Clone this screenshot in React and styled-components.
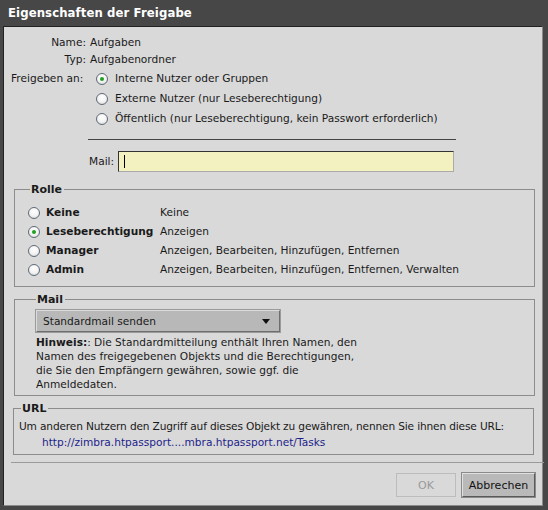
import React from 'react'
import styled, { createGlobalStyle, css } from 'styled-components'

const GlobalStyle = createGlobalStyle`
  html, body {
    margin: 0;
    padding: 0;
    background: #474747;
  }
  body {
    font-family: 'DejaVu Sans', Tahoma, sans-serif;
    font-size: 10.6px;
    color: #1a1a1a;
  }
`

const Window = styled.div`
  width: 548px;
  height: 510px;
  box-sizing: border-box;
  background: #474747;
  padding: 0 5px 4px 3px;
  display: flex;
  flex-direction: column;
`

const TitleBar = styled.div`
  height: 26px;
  display: flex;
  align-items: center;
  padding-left: 5px;
  color: #fff;
  font-weight: bold;
  font-size: 11.7px;
  letter-spacing: 0.1px;
`

const Panel = styled.div`
  flex: 1;
  background: #d9d9d9;
  border-top: 1px solid #222;
  border-left: 1px solid #222;
  border-right: 1px solid #8a8a8a;
  border-bottom: 1px solid #8a8a8a;
  display: flex;
  flex-direction: column;
  padding: 9px 7px 0 7px;
`

const InfoGrid = styled.div`
  display: grid;
  grid-template-columns: 75px auto;
  column-gap: 4px;
  row-gap: 4px;
  align-items: start;
`

const Label = styled.div`
  text-align: ${p => (p.$left ? 'left' : 'right')};
  white-space: nowrap;
  line-height: 13px;
  ${p => p.$left && css`margin-top: 2px;`}
`

const Value = styled.div`
  line-height: 13px;
`

const RadioList = styled.div`
  display: flex;
  flex-direction: column;
  gap: 7px;
  padding-left: 6px;
  margin-top: 2px;
`

const RadioRow = styled.label`
  display: flex;
  align-items: center;
  gap: 7px;
  line-height: 13px;
  white-space: nowrap;
`

const Radio = styled.span`
  width: 12px;
  height: 12px;
  box-sizing: border-box;
  border-radius: 50%;
  border: 1px solid #5f6b78;
  background: radial-gradient(circle at 50% 35%, #ffffff 0%, #f2f2f2 55%, #c8c8c8 100%);
  position: relative;
  flex: none;
  ${p => p.checked && css`
    &::after {
      content: '';
      position: absolute;
      left: 3px;
      top: 3px;
      width: 4px;
      height: 4px;
      border-radius: 50%;
      background: #20a020;
    }
  `}
`

const Divider = styled.div`
  margin: 14px 0 0 77px;
  width: 368px;
  height: 1px;
  background: #444;
`

const MailRow = styled.div`
  display: flex;
  align-items: center;
  gap: 4px;
  margin: 11px 0 0 78px;
`

const MailInput = styled.div`
  width: 336px;
  height: 21px;
  box-sizing: border-box;
  background: #f3f1c0;
  border-top: 1px solid #333;
  border-left: 1px solid #333;
  border-right: 1px solid #aaa;
  border-bottom: 1px solid #aaa;
  display: flex;
  align-items: center;
  padding-left: 5px;

  &::before {
    content: '';
    width: 1px;
    height: 13px;
    background: #000;
  }
`

const Group = styled.fieldset`
  margin: ${p => p.$top}px 0 0 ${p => p.$left || 3}px;
  width: 521px;
  box-sizing: border-box;
  border: 1px solid #8c8c8c;
  padding: ${p => p.$pad};
  min-width: 0;
`

const Legend = styled.legend`
  font-weight: bold;
  font-size: 11px;
  padding: 0 2px 0 1px;
  margin-left: 2px;
  line-height: 13px;
`

const RoleGrid = styled.div`
  display: grid;
  grid-template-columns: 132px auto;
  row-gap: 6px;
`

const RoleName = styled(RadioRow)`
  font-weight: bold;
  gap: 6px;
`

const RoleDesc = styled.div`
  line-height: 13px;
`

const Select = styled.div`
  width: 244px;
  height: 22px;
  box-sizing: border-box;
  background: #b8b8b8;
  border-top: 1px solid #dcdcdc;
  border-left: 1px solid #dcdcdc;
  border-right: 1px solid #6e6e6e;
  border-bottom: 1px solid #6e6e6e;
  outline: 1px solid #9a9a9a;
  display: flex;
  align-items: center;
  justify-content: space-between;
  padding: 0 9px 0 6px;
  margin-left: 2px;
`

const Arrow = styled.span`
  width: 0;
  height: 0;
  border-left: 4px solid transparent;
  border-right: 4px solid transparent;
  border-top: 5px solid #111;
`

const Note = styled.p`
  margin: 3px 0 0 2px;
  line-height: 14px;
`

const UrlText = styled.div`
  line-height: 14px;
  white-space: nowrap;
  letter-spacing: -0.15px;
`

const UrlLink = styled.a`
  display: block;
  margin-left: 23px;
  margin-top: 2px;
  color: #1d1d8c;
  text-decoration: none;
  line-height: 14px;
`

const FooterLine = styled.div`
  margin-top: 7px;
  height: 1px;
  background: #9a9a9a;
  width: 533px;
`

const Footer = styled.div`
  display: flex;
  justify-content: flex-end;
  gap: 6px;
  padding-top: 10px;
`

const Button = styled.button`
  font-family: inherit;
  font-size: 11px;
  height: 24px;
  box-sizing: border-box;
  padding: 0;
  width: ${p => p.$w}px;
  ${p => p.disabled ? css`
    background: #d9d9d9;
    border: 1px solid #bcbcbc;
    color: #9a9a9a;
  ` : css`
    background: #b9b9b9;
    border-top: 1px solid #e0e0e0;
    border-left: 1px solid #e0e0e0;
    border-right: 1px solid #5a5a5a;
    border-bottom: 1px solid #5a5a5a;
    outline: 1px solid #8a8a8a;
    color: #111;
  `}
`

const shareOptions = [
  { label: 'Interne Nutzer oder Gruppen', checked: true },
  { label: 'Externe Nutzer (nur Leseberechtigung)' },
  { label: 'Öffentlich (nur Leseberechtigung, kein Passwort erforderlich)' },
]

const roles = [
  { name: 'Keine', desc: 'Keine' },
  { name: 'Leseberechtigung', desc: 'Anzeigen', checked: true },
  { name: 'Manager', desc: 'Anzeigen, Bearbeiten, Hinzufügen, Entfernen' },
  { name: 'Admin', desc: 'Anzeigen, Bearbeiten, Hinzufügen, Entfernen, Verwalten' },
]

const App = () => (
  <Window>
    <GlobalStyle />
    <TitleBar>Eigenschaften der Freigabe</TitleBar>
    <Panel>
      <InfoGrid>
        <Label>Name:</Label>
        <Value>Aufgaben</Value>
        <Label>Typ:</Label>
        <Value>Aufgabenordner</Value>
        <Label $left>Freigeben an:</Label>
        <RadioList>
          {shareOptions.map(o => (
            <RadioRow key={o.label}>
              <Radio checked={o.checked} />
              {o.label}
            </RadioRow>
          ))}
        </RadioList>
      </InfoGrid>
      <Divider />
      <MailRow>
        <Label>Mail:</Label>
        <MailInput />
      </MailRow>

      <Group $top={11} $pad="10px 0 10px 13px">
        <Legend>Rolle</Legend>
        <RoleGrid>
          {roles.map(r => (
            <React.Fragment key={r.name}>
              <RoleName>
                <Radio checked={r.checked} />
                {r.name}
              </RoleName>
              <RoleDesc>{r.desc}</RoleDesc>
            </React.Fragment>
          ))}
        </RoleGrid>
      </Group>

      <Group $top={6} $pad="4px 0 4px 19px">
        <Legend>Mail</Legend>
        <Select>
          Standardmail senden
          <Arrow />
        </Select>
        <Note>
          <b>Hinweis:</b>: Die Standardmitteilung enthält Ihren Namen, den<br />
          Namen des freigegebenen Objekts und die Berechtigungen,<br />
          die Sie den Empfängern gewähren, sowie ggf. die<br />
          Anmeldedaten.
        </Note>
      </Group>

      <Group $top={6} $left={2} $pad="4px 0 5px 5px">
        <Legend>URL</Legend>
        <UrlText>Um anderen Nutzern den Zugriff auf dieses Objekt zu gewähren, nennen Sie ihnen diese URL:</UrlText>
        <UrlLink href="#">http://zimbra.htpassport....mbra.htpassport.net/Tasks</UrlLink>
      </Group>

      <FooterLine />
      <Footer>
        <Button disabled $w={60}>OK</Button>
        <Button $w={73}>Abbrechen</Button>
      </Footer>
    </Panel>
  </Window>
)

export default App
